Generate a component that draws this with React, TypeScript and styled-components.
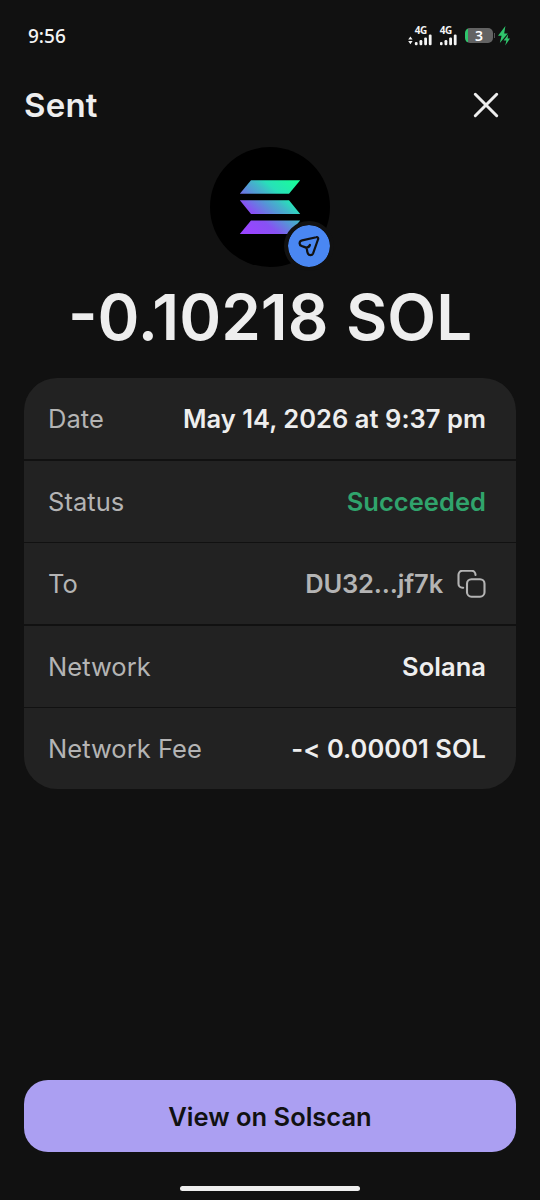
import React from "react";
import styled, { createGlobalStyle } from "styled-components";

const Global = createGlobalStyle`
  * { box-sizing: border-box; }
  body { margin: 0; background: #111111; }
`;

const Screen = styled.main`
  width: 540px;
  height: 1200px;
  background: #111111;
  color: #eeeeee;
  font-family: Inter, "Noto Sans", sans-serif;
  display: flex;
  flex-direction: column;
  overflow: hidden;
`;

const StatusBar = styled.div`
  height: 71px;
  padding: 0 29px 0 28px;
  display: flex;
  align-items: center;
  justify-content: space-between;
`;

const Clock = styled.span`
  font-family: "Noto Sans", sans-serif;
  font-size: 19px;
  font-weight: 500;
  line-height: 24px;
  color: #f4f4f4;
`;

const StatusIcons = styled.div`
  display: flex;
  align-items: center;
  height: 24px;
`;

const Signal = styled.div<{ $width: number }>`
  width: ${(p) => p.$width}px;
  margin-right: 8px;
  height: 20px;
  display: flex;
  flex-direction: column;
  align-items: flex-end;
`;

const SignalLabel = styled.span`
  font-family: "Noto Sans", sans-serif;
  font-size: 10px;
  line-height: 9px;
  margin-bottom: -1px;
  font-weight: 700;
  letter-spacing: -0.3px;
  padding-right: 5px;
  color: #f4f4f4;
`;

const Battery = styled.div`
  width: 28px;
  height: 15px;
  border-radius: 5px;
  background: linear-gradient(90deg, #2fc56c 0 3px, #636363 3px);
  color: #ffffff;
  font-family: "Noto Sans", sans-serif;
  font-size: 14px;
  font-weight: 600;
  line-height: 15px;
  text-align: center;
`;

const BatteryCap = styled.div`
  width: 1px;
  height: 5px;
  margin: 0 3px 0 1px;
  background: #555555;
`;

const Header = styled.header`
  height: 68px;
  padding: 0 40px 0 24px;
  display: flex;
  align-items: center;
  justify-content: space-between;
`;

const Title = styled.h1`
  margin: 0;
  font-size: 33px;
  line-height: 40px;
  font-weight: 600;
  letter-spacing: 0.2px;
`;

const IconButton = styled.button`
  padding: 0;
  border: 0;
  background: none;
  color: inherit;
  display: flex;
`;

const TokenIcon = styled.div`
  position: relative;
  width: 120px;
  height: 120px;
  margin: 8px auto 0;
  border-radius: 50%;
  background: #000000;
  flex: none;
`;

const TokenLogo = styled.svg`
  display: block;
`;

const Badge = styled.div`
  position: absolute;
  right: -4px;
  bottom: -4px;
  width: 50px;
  height: 50px;
  border-radius: 50%;
  border: 4px solid #111111;
  background: #4a87f2;
  background-clip: padding-box;
`;

const Amount = styled.div`
  margin-top: 10px;
  height: 80px;
  font-size: 63.6px;
  line-height: 80px;
  font-weight: 600;
  word-spacing: 1.5px;
  text-align: center;
  white-space: nowrap;
`;

const Details = styled.dl`
  margin: 21px 24px 0;
  display: flex;
  flex-direction: column;
  gap: 1.5px;
  border-radius: 33px;
  overflow: hidden;
  flex: none;
`;

const Row = styled.div`
  height: 81px;
  padding: 1px 30px 0 24px;
  display: flex;
  align-items: center;
  justify-content: space-between;
  background: #222222;
  font-size: 25.5px;
  line-height: 32px;
  letter-spacing: 0.04px;
  white-space: nowrap;
`;

const Label = styled.dt`
  color: #b4b4b4;
  font-weight: 400;
`;

const Value = styled.dd<{ $color?: string; $tight?: boolean }>`
  margin: 0;
  display: flex;
  align-items: center;
  gap: 14px;
  font-weight: 600;
  letter-spacing: ${(p) => (p.$tight ? "-0.15px" : "inherit")};
  color: ${(p) => p.$color ?? "#eeeeee"};
`;

const Footer = styled.footer`
  margin-top: auto;
  height: 120px;
  padding: 0 24px;
  display: flex;
  flex-direction: column;
  align-items: center;
`;

const PrimaryButton = styled.button`
  width: 100%;
  height: 72px;
  padding: 0;
  border: 0;
  border-radius: 24px;
  background: #ab9ff2;
  color: #111111;
  font-family: inherit;
  font-size: 25.5px;
  font-weight: 600;
`;

const HomeIndicator = styled.div`
  width: 180px;
  height: 5px;
  margin-top: 34px;
  border-radius: 3px;
  background: #eeeeee;
`;

const SignalBars = ({ arrows = false }: { arrows?: boolean }) => (
  <svg width={arrows ? 24 : 17} height="12" viewBox={arrows ? "-7 0 24 12" : "0 0 17 12"} fill="#f4f4f4">
    {arrows && <path d="M-4.6 2.4-2.4 5.6h-4.4zM-4.6 10.2-6.8 7h4.4z" />}
    <rect x="-0.2" y="8" width="2.8" height="3.2" rx="1.2" />
    <rect x="4.5" y="6" width="2.8" height="5.2" rx="1.2" />
    <rect x="9.2" y="3.4" width="2.8" height="7.8" rx="1.2" />
    <rect x="13.8" y="0.6" width="2.8" height="10.6" rx="1.2" />
  </svg>
);

const CopyIcon = () => (
  <svg width="29" height="29" viewBox="0 0.8 29 29" fill="none" stroke="#b4b4b4" strokeWidth="2.1" strokeLinecap="round">
    <rect x="10" y="10" width="17.5" height="17.5" rx="4.5" />
    <path d="M6.2 18.5H5.5a4 4 0 0 1-4-4v-9a4 4 0 0 1 4-4h9a4 4 0 0 1 4 4v.3" />
  </svg>
);

const rows: { label: string; value: string; color?: string; copy?: boolean }[] = [
  { label: "Date", value: "May 14, 2026 at 9:37 pm" },
  { label: "Status", value: "Succeeded", color: "#30a46c" },
  { label: "To", value: "DU32...jf7k", color: "#b4b4b4", copy: true },
  { label: "Network", value: "Solana" },
  { label: "Network Fee", value: "-< 0.00001 SOL" },
];

export default function App() {
  return (
    <Screen>
      <Global />
      <StatusBar>
        <Clock>9:56</Clock>
        <StatusIcons>
          <Signal $width={24}>
            <SignalLabel>4G</SignalLabel>
            <SignalBars arrows />
          </Signal>
          <Signal $width={17}>
            <SignalLabel>4G</SignalLabel>
            <SignalBars />
          </Signal>
          <Battery>3</Battery>
          <BatteryCap />
          <svg width="13" height="20" viewBox="0 0 13 20" fill="#2fc56c">
            <path d="M7.4 0 0 9.8h3.6L1.8 17 9.8 7.4H6.2z" />
            <path d="M10.2 8.6 5.6 14.6h2.8L7.2 19.6l4.8-7H9.6z" />
          </svg>
        </StatusIcons>
      </StatusBar>
      <Header>
        <Title>Sent</Title>
        <IconButton aria-label="Close">
          <svg width="28" height="28" viewBox="0 0 28 28" stroke="#eeeeee" strokeWidth="3" strokeLinecap="round">
            <path d="M3.3 3.3l21.4 21.4M24.7 3.3 3.3 24.7" />
          </svg>
        </IconButton>
      </Header>
      <TokenIcon>
        <TokenLogo width="120" height="120" viewBox="0 0 120 120">
          <defs>
            <linearGradient id="sol" gradientUnits="userSpaceOnUse" x1="35" y1="88" x2="84" y2="31">
              <stop offset="0.08" stopColor="#9945ff" />
              <stop offset="0.3" stopColor="#8752f3" />
              <stop offset="0.5" stopColor="#5497d5" />
              <stop offset="0.6" stopColor="#43b4ca" />
              <stop offset="0.72" stopColor="#28e0b9" />
              <stop offset="0.97" stopColor="#19fb9b" />
            </linearGradient>
          </defs>
          <g fill="url(#sol)">
            <path d="M41 33.2h49.2L79 46.8H29.8z" />
            <path d="M29.8 53.3H79L90.2 66.9H41z" />
            <path d="M41 73.5h49.2L79 87.1H29.8z" />
          </g>
        </TokenLogo>
        <Badge>
          <svg width="42" height="42" viewBox="0 0 42 42" fill="none" stroke="#111111" strokeWidth="2.2" strokeLinejoin="round" strokeLinecap="round">
            <path d="M28.2 12.2 14.2 15.4c-3.2.8-3.5 4.3-.6 5.6 1.4.6 3 .9 4.2 1.6.8.5 1.1 1.3 1.2 2.3.1 1.4.3 2.5.9 3.7 1.1 2.2 4.2 2.1 5.2-.3L30 14.5c.6-1.5-.3-2.7-1.8-2.3zM18.2 22.6c1.8-.1 3.1-1 3.7-2.6" />
          </svg>
        </Badge>
      </TokenIcon>
      <Amount>-0.10218 SOL</Amount>
      <Details>
        {rows.map((row) => (
          <Row key={row.label}>
            <Label>{row.label}</Label>
            <Value $color={row.color} $tight={row.copy}>
              {row.value}
              {row.copy && <CopyIcon />}
            </Value>
          </Row>
        ))}
      </Details>
      <Footer>
        <PrimaryButton>View on Solscan</PrimaryButton>
        <HomeIndicator />
      </Footer>
    </Screen>
  );
}
